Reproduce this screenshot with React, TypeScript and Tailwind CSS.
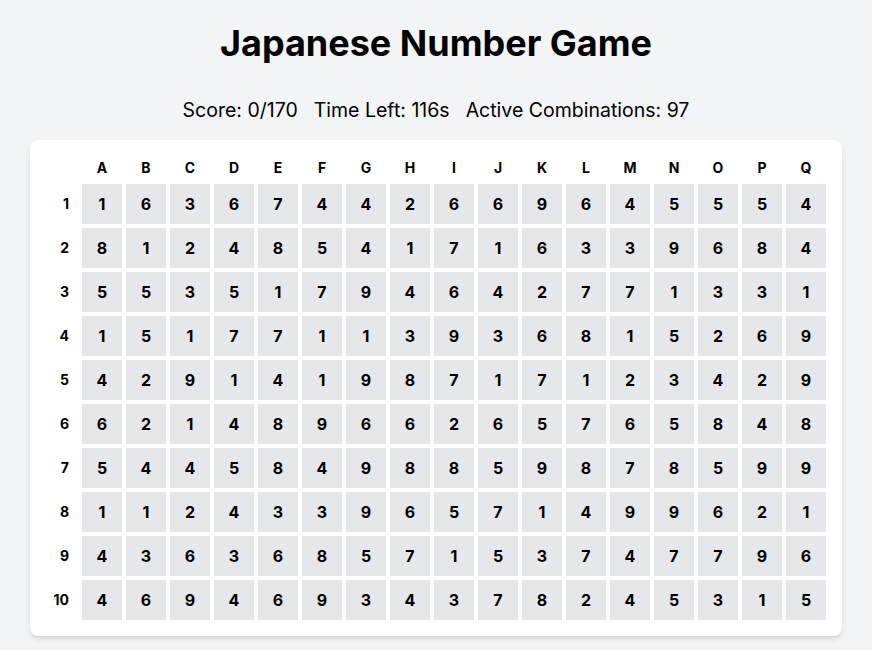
import React from "react";

const letters = "ABCDEFGHIJKLMNOPQ".split("");
const data = [
  "16367442669645554",
  "81248541716339684",
  "55351794642771331",
  "15177113936815269",
  "42914198717123429",
  "62148966265765848",
  "54458498859878599",
  "11243396571499621",
  "43636857153747796",
  "46946934378245315",
];

export default function App() {
  return (
    <div className="min-h-[650px] bg-[#f3f4f6] flex flex-col items-center pt-[23px]" style={{ fontFamily: "Inter, 'Liberation Sans', sans-serif" }}>
      <h1 className="text-4xl font-bold leading-10 text-black">Japanese Number Game</h1>
      <div className="mt-[33px] text-[19.5px] leading-7 text-black flex gap-4">
        <span>Score: 0/170</span>
        <span>Time Left: 116s</span>
        <span>Active Combinations: 97</span>
      </div>
      <div className="mt-4 bg-white rounded-lg shadow-md p-4">
        <div className="grid grid-cols-[32px_repeat(17,40px)] gap-1">
          <div className="h-6" />
          {letters.map((l) => (
            <div key={l} className="h-6 flex items-center justify-center text-sm font-bold">{l}</div>
          ))}
          {data.map((row, r) => (
            <React.Fragment key={r}>
              <div className="h-10 flex items-center justify-end pr-[9px] text-sm font-bold">{r + 1}</div>
              {row.split("").map((d, c) => (
                <div key={c} className="h-10 bg-[#e5e7eb] flex items-center justify-center text-base font-bold">{d}</div>
              ))}
            </React.Fragment>
          ))}
        </div>
      </div>
    </div>
  );
}
